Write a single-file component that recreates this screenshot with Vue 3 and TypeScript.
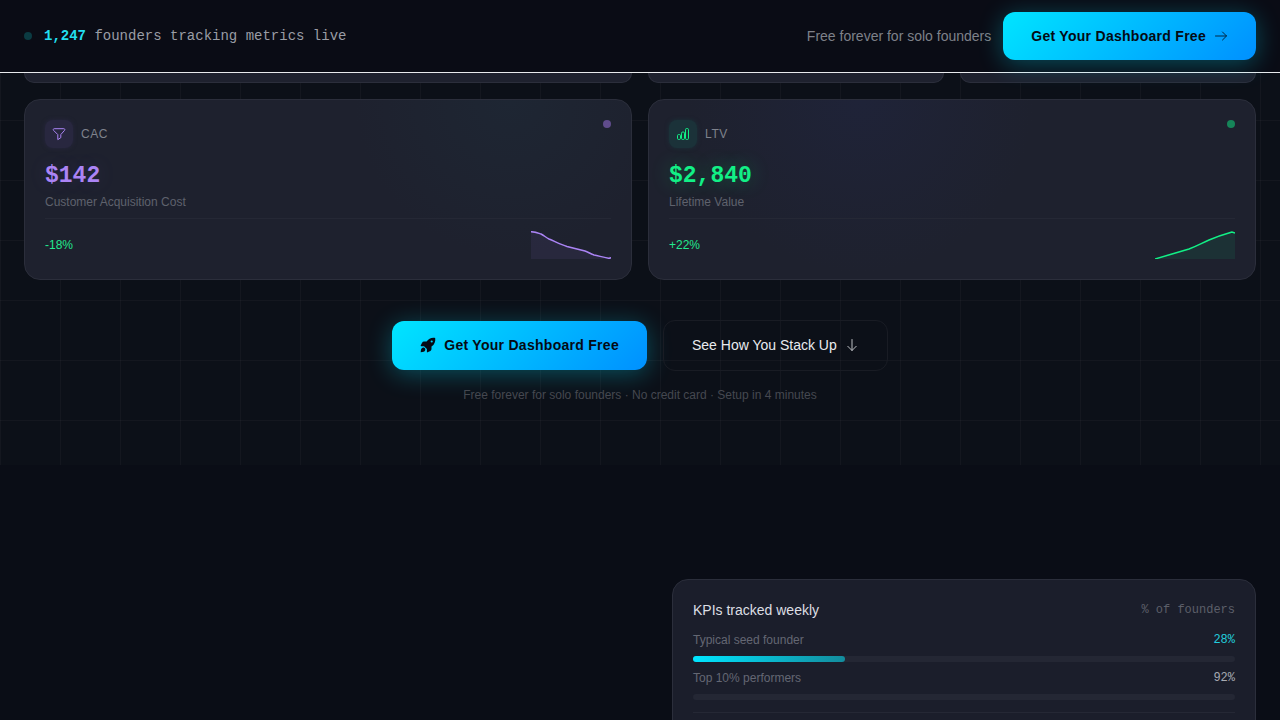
<script setup lang="ts">
interface Metric {
  key: string
  tone: 'purple' | 'green'
  name: string
  value: string
  label: string
  change: string
  line: string
}

interface Benchmark {
  label: string
  percent: number
  filled: number
  highlight: boolean
}

const metrics: Metric[] = [
  {
    key: 'cac',
    tone: 'purple',
    name: 'CAC',
    value: '$142',
    label: 'Customer Acquisition Cost',
    change: '-18%',
    line: 'M0 .7C4 .8 7 2 10 3C13 4.500 15 6.500 18 8C24 10.500 30 13.500 36 15.500C42 17 48 18.500 54 20C57 21 60 23 63 24C68 25 73 26.500 79 27.500L79.500 26',
  },
  {
    key: 'ltv',
    tone: 'green',
    name: 'LTV',
    value: '$2,840',
    label: 'Lifetime Value',
    change: '+22%',
    line: 'M0 28C10 25 24 21 34 18C44 14 47 12 54 9C61 6 70 3 77 1L80 2',
  },
]

const benchmarks: Benchmark[] = [
  { label: 'Typical seed founder', percent: 28, filled: 28, highlight: true },
  { label: 'Top 10% performers', percent: 92, filled: 0, highlight: false },
]
</script>

<template>
  <div class="page">
    <header class="topbar">
      <p class="live"><span class="live-dot"></span><span><strong>1,247</strong> founders tracking metrics live</span></p>
      <div class="topbar-cta">
        <span class="note">Free forever for solo founders</span>
        <button type="button" class="btn primary">
          Get Your Dashboard Free
          <svg class="icon arrow" viewBox="0 0 14 14" aria-hidden="true"><path d="M1.500 7H12.500M8.500 3L12.500 7L8.500 11" /></svg>
        </button>
      </div>
    </header>

    <main>
      <section class="hero">
        <div class="cards">
          <div class="card tail wide"></div>
          <div class="card tail"></div>
          <div class="card tail"></div>
          <article v-for="m in metrics" :key="m.key" class="card wide metric" :class="m.tone">
            <div class="metric-head">
              <span class="badge">
                <svg v-if="m.key === 'cac'" class="badge-icon" viewBox="0 0 14 14" aria-hidden="true"><path d="M2.200 1.700H11.800C12.900 1.700 13 2.700 12.500 3.400L8.800 7.600V10.700L5.800 12.600V7.600L1.600 3.400C1 2.700 1.200 1.700 2.200 1.700Z" /></svg>
                <svg v-else class="badge-icon" viewBox="0 0 14 14" aria-hidden="true"><rect x="1.500" y="7.500" width="3" height="5" rx="1.200" /><rect x="5.500" y="5" width="3" height="7.500" rx="1.200" /><rect x="9.500" y="1.500" width="3" height="11" rx="1.200" /></svg>
              </span>
              <h2>{{ m.name }}</h2>
              <span class="status"></span>
            </div>
            <p class="value">{{ m.value }}</p>
            <p class="label">{{ m.label }}</p>
            <div class="metric-foot">
              <span class="change">{{ m.change }}</span>
              <svg class="spark" viewBox="0 0 80 28" aria-hidden="true">
                <path class="area" :d="m.line + 'V28H0Z'" />
                <path class="line" :d="m.line" />
              </svg>
            </div>
          </article>
        </div>

        <div class="actions">
          <button type="button" class="btn primary">
            <svg class="icon large" viewBox="0 0 16 16" aria-hidden="true"><path fill-rule="evenodd" d="M15.200.900C11.500.300 8.600 1.600 6.600 4.500H4C3.100 4.600 2.500 5 2.100 5.700L.700 8.400C.500 8.900.700 9.200 1.200 9.200H4L6.900 12V14.900C6.900 15.300 7.200 15.500 7.600 15.300L10.400 13.900C11.100 13.500 11.500 12.900 11.500 12.100V9.500C14.500 7.400 15.700 4.500 15.200.900ZM11.700 3.400A1.100 1.100 0 1 1 11.700 5.600A1.100 1.100 0 0 1 11.700 3.400Z" /><path d="M2.700 10.700C1.200 11.200.700 13 .700 15.200C3 15.100 4.700 14.600 5.200 13.200C5.700 11.500 4.400 10.300 2.700 10.700Z" /></svg>
            Get Your Dashboard Free
          </button>
          <button type="button" class="btn ghost">
            See How You Stack Up
            <svg class="icon arrow" viewBox="0 0 14 14" aria-hidden="true"><path d="M7 1.500V12.500M2.800 8.300L7 12.500L11.200 8.300" /></svg>
          </button>
        </div>
        <p class="terms">Free forever for solo founders · No credit card · Setup in 4 minutes</p>
      </section>

      <section class="compare">
        <div class="card panel">
          <div class="panel-head">
            <h2>KPIs tracked weekly</h2>
            <span>% of founders</span>
          </div>
          <div v-for="b in benchmarks" :key="b.label" class="bench">
            <div class="bench-row">
              <span>{{ b.label }}</span>
              <span class="pct" :class="{ highlight: b.highlight }">{{ b.percent }}%</span>
            </div>
            <div class="track"><div class="fill" :style="{ width: b.filled + '%' }"></div></div>
          </div>
          <hr />
        </div>
      </section>
    </main>
  </div>
</template>

<style>
html,
body {
  background: #0a0d16;
}
</style>

<style scoped>
* {
  box-sizing: border-box;
}
p,
h2 {
  margin: 0;
  font-weight: 400;
}
.page {
  height: 100vh;
  overflow: hidden;
  background: #0a0d16;
  color: #fff;
  font-family: "Liberation Sans", Arial, sans-serif;
}
.topbar {
  position: relative;
  z-index: 2;
  display: flex;
  align-items: center;
  justify-content: space-between;
  padding: 12px 24px;
  border-bottom: 1px solid #e8eaed;
  background: #0a0c15;
}
.live {
  display: flex;
  align-items: center;
  gap: 12px;
  color: #9a9da5;
  font: 14px/20px "Liberation Mono", monospace;
}
.live strong {
  color: #22dff0;
}
.live-dot {
  width: 8px;
  height: 8px;
  border-radius: 50%;
  background: #0b3b42;
}
.topbar-cta {
  display: flex;
  align-items: center;
  gap: 12px;
}
.note {
  color: #7e8189;
  font-size: 14px;
}
.btn {
  display: inline-flex;
  align-items: center;
  justify-content: center;
  gap: 8px;
  padding: 14px 28px;
  border: 0;
  border-radius: 12px;
  font: 14px/20px "Liberation Sans", Arial, sans-serif;
}
.primary {
  background: linear-gradient(135deg, #00e5ff, #0090ff);
  box-shadow: 0 4px 24px rgba(0, 229, 255, 0.3);
  color: #050a14;
  font-weight: 700;
  letter-spacing: 0.02em;
}
.icon {
  width: 14px;
  height: 14px;
  fill: currentColor;
}
.large {
  width: 16px;
  height: 16px;
}
.arrow {
  fill: none;
  stroke: currentColor;
  stroke-linecap: round;
  stroke-linejoin: round;
  opacity: 0.8;
}
.hero {
  padding: 0 24px 62px;
  background-color: #0c1018;
  background-image:
    linear-gradient(rgba(255, 255, 255, 0.03) 1px, transparent 1px),
    linear-gradient(90deg, rgba(255, 255, 255, 0.03) 1px, transparent 1px);
  background-size: 60px 60px;
  background-position: 0 47px;
}
.cards {
  display: grid;
  grid-template-columns: repeat(4, 1fr);
  gap: 16px;
}
.card {
  border: 1px solid #2b2e3b;
  border-radius: 16px;
  background: #1e212e;
}
.wide {
  grid-column: span 2;
}
.tail {
  height: 10px;
  border-top: 0;
  border-radius: 0 0 16px 16px;
}
.metric {
  padding: 20px;
}
.metric.purple {
  background: radial-gradient(circle at 80% 0, #1e2633, #1e212e 30%);
}
.metric.green {
  background: radial-gradient(circle at 35% 0, #1f2338, #1e212e 40%);
}
.metric-head {
  display: flex;
  align-items: center;
  gap: 8px;
}
.badge {
  display: flex;
  align-items: center;
  justify-content: center;
  width: 28px;
  height: 28px;
  border-radius: 8px;
}
.badge-icon {
  width: 14px;
  height: 14px;
  fill: none;
  stroke: currentColor;
  stroke-linejoin: round;
}
.metric-head h2 {
  color: #7f828c;
  font-size: 12px;
  letter-spacing: 0.05em;
}
.status {
  align-self: flex-start;
  width: 8px;
  height: 8px;
  margin-left: auto;
  border-radius: 50%;
}
.value {
  margin-top: 14px;
  font: 700 23px/28px "Liberation Mono", monospace;
}
.label {
  margin-top: 4px;
  color: #5f626d;
  font-size: 12px;
  line-height: 16px;
}
.metric-foot {
  display: flex;
  align-items: center;
  justify-content: space-between;
  margin-top: 8px;
  padding-top: 12px;
  border-top: 1px solid #252835;
}
.change {
  color: #22e88e;
  font-size: 12px;
}
.spark {
  width: 80px;
  height: 28px;
}
.line {
  fill: none;
  stroke: currentColor;
  stroke-width: 1.5;
}
.area {
  fill: currentColor;
  opacity: 0.08;
}
.purple .badge,
.purple .value,
.purple .spark {
  color: #ab84f5;
}
.purple .badge {
  background: #28273f;
  box-shadow: 0 0 4px #28273f;
}
.purple .status {
  background: #604c8c;
}
.green .badge,
.green .value,
.green .spark {
  color: #12f086;
}
.green .badge {
  background: #1b3239;
  box-shadow: 0 0 4px #1b3239;
}
.green .status {
  background: #168559;
}
.purple .value {
  text-shadow: 0 0 20px rgba(171, 132, 245, 0.15);
}
.green .value {
  text-shadow: 0 0 20px rgba(0, 255, 136, 0.3);
}
.actions {
  display: flex;
  align-items: center;
  justify-content: center;
  gap: 16px;
  margin-top: 40px;
}
.actions .btn {
  padding-bottom: 15px;
}
.ghost {
  border: 1px solid #191c24;
  background: transparent;
  color: #e9ebef;
}
.terms {
  margin-top: 16px;
  color: #454850;
  font-size: 12px;
  line-height: 16px;
  text-align: center;
}
.compare {
  display: grid;
  grid-template-columns: 1fr 1fr;
  gap: 64px;
  padding: 114px 24px;
}
.panel {
  grid-column: 2;
  padding: 20px 20px 32px;
  background: #1b1e2b;
}
.panel-head {
  display: flex;
  justify-content: space-between;
  color: #dddfe4;
  line-height: 20px;
}
.panel-head h2 {
  font-size: 14px;
}
.panel-head span {
  color: #5c5f69;
  font: 12px/20px "Liberation Mono", monospace;
}
.bench {
  margin-top: 8px;
}
.panel-head + .bench {
  margin-top: 12px;
}
.bench-row {
  display: flex;
  justify-content: space-between;
  color: #646773;
  font-size: 12px;
  line-height: 16px;
}
.pct {
  color: #a7aab2;
  font-family: "Liberation Mono", monospace;
}
.highlight {
  color: #22cddd;
}
.track {
  height: 6px;
  margin-top: 8px;
  border-radius: 3px;
  background: #242734;
}
.fill {
  height: 6px;
  border-radius: 3px;
  background: linear-gradient(90deg, #00e5ff, #138c9d);
}
hr {
  height: 1px;
  margin: 12px 0 0;
  border: 0;
  background: #252835;
}
</style>
